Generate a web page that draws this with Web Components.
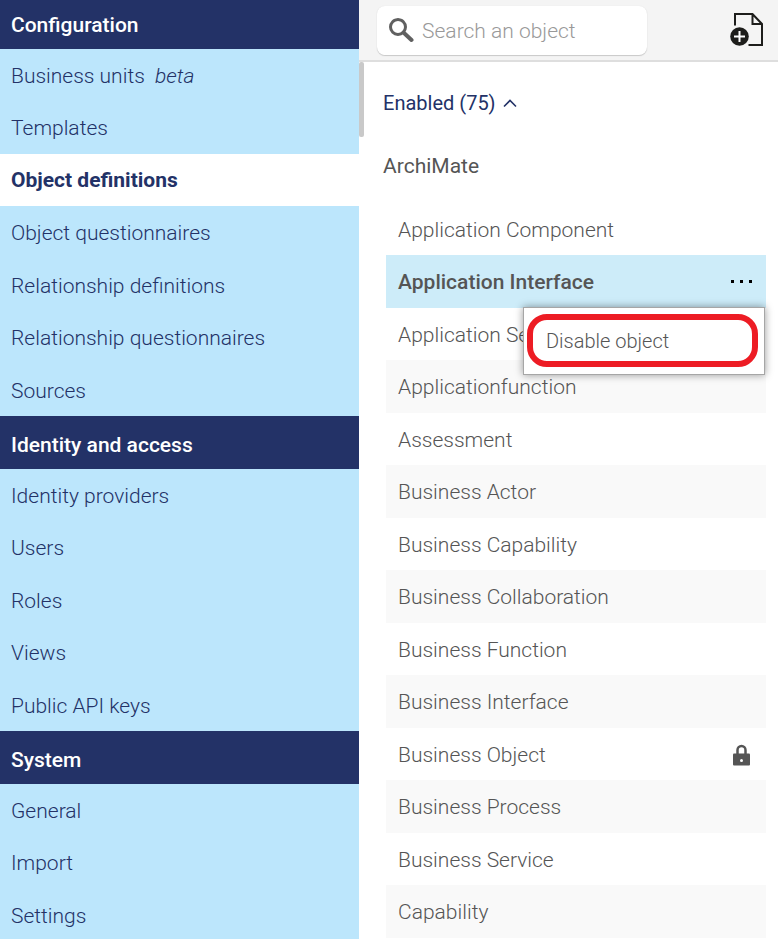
<!DOCTYPE html>
<html lang="en">
<head>
<meta charset="utf-8">
<meta name="viewport" content="width=device-width, initial-scale=1">
<title>Object definitions</title>
<style>
  body {
    margin: 0;
    font-family: Roboto, "Liberation Sans", sans-serif;
    font-size: 21px;
    font-weight: 300;
    line-height: 28px;
    color: #555;
    background: #fff;
  }
</style>
</head>
<body>
<admin-shell>
  <nav-group slot="nav" label="Configuration">
    <nav-item>Business units&nbsp; <i>beta</i></nav-item>
    <nav-item>Templates</nav-item>
    <nav-item current>Object definitions</nav-item>
    <nav-item>Object questionnaires</nav-item>
    <nav-item>Relationship definitions</nav-item>
    <nav-item>Relationship questionnaires</nav-item>
    <nav-item>Sources</nav-item>
  </nav-group>
  <nav-group slot="nav" label="Identity and access">
    <nav-item>Identity providers</nav-item>
    <nav-item>Users</nav-item>
    <nav-item>Roles</nav-item>
    <nav-item>Views</nav-item>
    <nav-item>Public API keys</nav-item>
  </nav-group>
  <nav-group slot="nav" label="System">
    <nav-item>General</nav-item>
    <nav-item>Import</nav-item>
    <nav-item>Settings</nav-item>
  </nav-group>

  <object-toolbar slot="toolbar" placeholder="Search an object"></object-toolbar>

  <object-list label="Enabled (75)" group="ArchiMate">
    <object-row>Application Component</object-row>
    <object-row selected>Application Interface
      <context-menu slot="menu">Disable object</context-menu>
    </object-row>
    <object-row>Application Service</object-row>
    <object-row>Applicationfunction</object-row>
    <object-row>Assessment</object-row>
    <object-row>Business Actor</object-row>
    <object-row>Business Capability</object-row>
    <object-row>Business Collaboration</object-row>
    <object-row>Business Function</object-row>
    <object-row>Business Interface</object-row>
    <object-row locked>Business Object</object-row>
    <object-row>Business Process</object-row>
    <object-row>Business Service</object-row>
    <object-row>Capability</object-row>
  </object-list>
</admin-shell>

<script>
/**
 * Shared base: renders the template of the subclass into an open shadow root.
 */
class BaseElement extends HTMLElement {
  constructor() {
    super();
    this.attachShadow({ mode: 'open' });
  }

  connectedCallback() {
    this.shadowRoot.innerHTML = this.template();
  }

  attr(name) {
    return this.getAttribute(name) || '';
  }
}

/**
 * <admin-shell>: sidebar on the left, toolbar and content on the right.
 * Slots: nav, toolbar, default
 */
class AdminShell extends BaseElement {
  template() {
    return `
      <style>
        :host {
          display: grid;
          grid-template-columns: minmax(0, 6fr) minmax(0, 7fr);
          height: 100vh;
          overflow: hidden;
        }
        nav {
          background: #bce6fc;
          overflow: hidden;
        }
        main {
          display: flex;
          flex-direction: column;
          min-height: 0;
        }
        .content {
          display: grid;
          grid-template-columns: 5px minmax(0, 1fr);
          min-height: 0;
          overflow: hidden;
        }
        .thumb {
          height: 75px;
          border-radius: 2px;
          background: #c9c9c9;
        }
      </style>
      <nav><slot name="nav"></slot></nav>
      <main>
        <slot name="toolbar"></slot>
        <div class="content">
          <div class="thumb"></div>
          <slot></slot>
        </div>
      </main>
    `;
  }
}

/**
 * <nav-group label>: dark heading with its links below.
 */
class NavGroup extends BaseElement {
  template() {
    return `
      <style>
        :host { display: block; }
        h2 {
          display: flex;
          align-items: center;
          box-sizing: border-box;
          height: 53px;
          margin: 0;
          padding: 4px 11px 0;
          font-size: 21px;
          font-weight: 500;
          color: #fff;
          background: #233267;
        }
        :host(:first-of-type) h2 {
          height: 49px;
          padding-top: 0;
        }
        .items {
          display: grid;
          grid-auto-rows: 52px 53px;
        }
      </style>
      <h2>${this.attr('label')}</h2>
      <div class="items"><slot></slot></div>
    `;
  }
}

/**
 * <nav-item current>: one sidebar link.
 */
class NavItem extends BaseElement {
  template() {
    return `
      <style>
        :host { display: grid; }
        a {
          display: flex;
          align-items: center;
          padding: 1px 11px 0;
          color: #233267;
          text-decoration: none;
          white-space: pre;
        }
        :host([current]) a {
          padding-top: 0;
          font-weight: 700;
          background: #fff;
        }
      </style>
      <a href="#"><span><slot></slot></span></a>
    `;
  }
}

/**
 * <object-toolbar placeholder>: search box and the "new object" button.
 */
class ObjectToolbar extends BaseElement {
  template() {
    return `
      <style>
        :host {
          display: flex;
          flex: none;
          align-items: center;
          justify-content: space-between;
          box-sizing: border-box;
          height: 62px;
          padding: 1px 14px 0 18px;
          background: #f4f4f4;
          border-bottom: 2px solid #dedede;
        }
        label {
          display: flex;
          align-items: center;
          gap: 8px;
          box-sizing: border-box;
          width: 270px;
          height: 49px;
          padding: 0 12px;
          border-radius: 8px;
          background: #fff;
          box-shadow: 0 1px 1px #c8c8c8, 0 0 1px #ddd;
        }
        input {
          flex: 1;
          min-width: 0;
          padding: 0;
          border: 0;
          outline: 0;
          font: inherit;
          color: #555;
          background: none;
        }
        input::placeholder { color: #999; opacity: 1; }
        button {
          display: flex;
          padding: 0;
          border: 0;
          background: none;
        }
        svg { flex: none; display: block; }
      </style>
      <label>
        <svg width="25" height="25" viewBox="0 0 25 25" fill="none" stroke="#606060">
          <circle cx="9" cy="9" r="7.5" stroke-width="3"/>
          <path d="M14.5 14.5 L22.5 22" stroke-width="4" stroke-linecap="round"/>
        </svg>
        <input type="text" aria-label="${this.attr('placeholder')}" placeholder="${this.attr('placeholder')}">
      </label>
      <button type="button" aria-label="New object">
        <svg width="34" height="35" viewBox="0 0 34 35">
          <path d="M5 12.5 V1 H22.5 L32 11 V32 H18.5 M22.5 1 V11 H32" fill="none" stroke="#1d1d1b" stroke-width="2"/>
          <circle cx="9.5" cy="23.5" r="9.3" fill="#1d1d1b"/>
          <path d="M9.5 18 V29 M4 23.5 H15" stroke="#fff" stroke-width="2"/>
        </svg>
      </button>
    `;
  }
}

class ObjectList extends BaseElement {
  template() {
    return `
      <style>
        :host {
          display: block;
          padding: 27px 12px 0 19px;
        }
        h3, h4 {
          margin: 0;
          font-weight: 400;
        }
        h3 {
          margin-bottom: 35px;
          font-size: 20px;
        }
        h4 {
          margin-bottom: 23px;
          font-size: 21px;
        }
        button {
          display: flex;
          align-items: center;
          gap: 7px;
          padding: 0;
          border: 0;
          font: inherit;
          color: #233267;
          background: none;
        }
        .rows {
          display: grid;
          grid-auto-rows: 52px 53px;
          margin-left: 3px;
        }
        ::slotted(object-row:nth-child(even)) { background: #f9f9f9; }
        ::slotted(object-row[selected]) { background: #cdecf9; }
      </style>
      <h3>
        <button type="button">${this.attr('label')}
          <svg width="14" height="10" viewBox="0 0 14 10" fill="none" stroke="currentColor" stroke-width="1.6">
            <path d="M1 8.5 L7 2.5 L13 8.5"/>
          </svg>
        </button>
      </h3>
      <h4>${this.attr('group')}</h4>
      <div class="rows"><slot></slot></div>
    `;
  }
}

/**
 * <object-row selected locked>: one object in the list.
 * Slots: menu, default
 */
class ObjectRow extends BaseElement {
  template() {
    const dots = `
      <button type="button" aria-label="Options">
        <svg width="23" height="5" viewBox="0 0 23 5">
          <path d="M0 0 h3 v3 h-3z M9 0 h3 v3 h-3z M18 0 h3 v3 h-3z"/>
        </svg>
      </button>`;
    const lock = `
      <svg width="17" height="22" viewBox="0 0 17 22">
        <path d="M4.5 10 V6 a4 4 0 0 1 8 0 V10" fill="none" stroke="#555" stroke-width="2.5"/>
        <rect y="9.5" width="17" height="12" rx="1" fill="#555"/>
        <circle cx="8.5" cy="16.5" r="1.5" fill="#fff"/>
      </svg>`;
    return `
      <style>
        :host {
          position: relative;
          display: flex;
          align-items: center;
          justify-content: space-between;
          padding: 1px 16px 0 12px;
        }
        :host([selected]) {
          z-index: 1;
          padding-right: 12px;
          font-weight: 500;
        }
        button {
          padding: 0;
          border: 0;
          background: none;
        }
        svg { display: block; }
        slot[name="menu"]::slotted(*) {
          position: absolute;
          top: 52px;
          right: 1px;
        }
      </style>
      <span><slot></slot></span>
      ${this.hasAttribute('selected') ? dots : ''}
      ${this.hasAttribute('locked') ? lock : ''}
      <slot name="menu"></slot>
    `;
  }
}

/**
 * <context-menu>: popup with a single highlighted action.
 */
class ContextMenu extends BaseElement {
  template() {
    return `
      <style>
        :host {
          display: block;
          box-sizing: border-box;
          width: 242px;
          padding: 6px 6px 7px 3px;
          border: 1px solid #a6a6a6;
          background: #fff;
          box-shadow: 0 0 8px rgba(0, 0, 0, 0.4);
          font-size: 20px;
          font-weight: 300;
        }
        button {
          display: block;
          box-sizing: border-box;
          width: 100%;
          height: 53px;
          padding: 0 13px;
          border: 6px solid #ed1c24;
          border-radius: 20px;
          font: inherit;
          color: #555;
          text-align: left;
          background: #fff;
        }
      </style>
      <button type="button"><slot></slot></button>
    `;
  }
}

customElements.define('admin-shell', AdminShell);
customElements.define('nav-group', NavGroup);
customElements.define('nav-item', NavItem);
customElements.define('object-toolbar', ObjectToolbar);
customElements.define('object-list', ObjectList);
customElements.define('object-row', ObjectRow);
customElements.define('context-menu', ContextMenu);
</script>
</body>
</html>
